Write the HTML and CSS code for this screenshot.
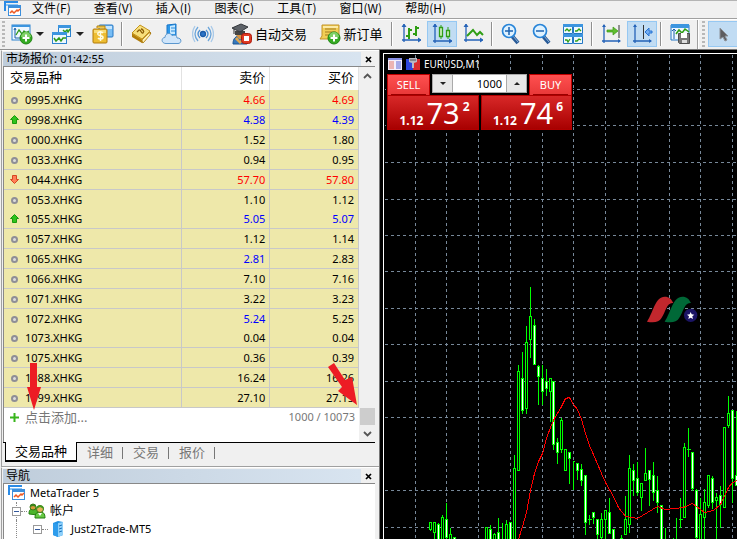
FILE: index.html
```html
<!DOCTYPE html>
<html lang="zh-CN">
<head>
<meta charset="utf-8">
<title>MetaTrader 5</title>
<link rel="stylesheet" href="styles.css">
</head>
<body>
<nav class="menu" aria-label="菜单">
  <svg class="menu-logo" width="18" height="16" viewBox="0 0 18 16"><path d="M1 10V1h13" fill="none" stroke="#2b8be6" stroke-width="2"/><path d="M2 3h12v2H2z" fill="#8cc6f7"/><rect x="4.500" y="4.500" width="12" height="10" fill="#fff" stroke="#3c8fdc"/><path d="M4 4h13v3H4z" fill="#3c8fdc"/><path d="m6 12 2-2 2 2 3-3 1 1 2-2" fill="none" stroke="#ee5a24" stroke-width="1.500"/></svg>
  <button class="menu-item">文件(F)</button>
  <button class="menu-item">查看(V)</button>
  <button class="menu-item">插入(I)</button>
  <button class="menu-item">图表(C)</button>
  <button class="menu-item">工具(T)</button>
  <button class="menu-item">窗口(W)</button>
  <button class="menu-item">帮助(H)</button>
</nav>

<div class="toolbar" role="toolbar" aria-label="工具栏">
  <span class="grip"></span>
  <button class="tool split" aria-label="新图表">
    <svg width="22" height="22" viewBox="0 0 22 22"><rect x="1" y="2" width="18" height="15" fill="#eef7ff" stroke="#2c83cf"/><path d="M1 2h18v2H1z" fill="#3c95df"/><path d="M4 6v9h12M3 7l1-2 1 2" fill="none" stroke="#1c5fa8"/><path d="m5 12 3-5 3 4 2-3 2 2 3-2" fill="none" stroke="#2e9a1c" stroke-width="1.300"/><circle cx="15" cy="15" r="6" fill="#35ab22" stroke="#1e8412"/><path d="M10 14a5 5 0 0 1 10 0z" fill="#7ed067"/><path d="M15 11.500v7M11.500 15h7" stroke="#fff" stroke-width="2"/></svg>
    <i class="caret"></i>
  </button>
  <button class="tool split" aria-label="配置文件">
    <svg width="22" height="22" viewBox="0 0 22 22"><rect x="7.500" y="2.500" width="12" height="11" fill="#eef7ff" stroke="#2c83cf"/><path d="M7 2h13v3H7z" fill="#3c95df"/><path d="m12 7 2 2 2-2 1 2 2-3" fill="none" stroke="#2e9a1c" stroke-width="1.500"/><rect x="1.500" y="9.500" width="14" height="11" fill="#eef7ff" stroke="#2c83cf"/><path d="M1 9h15v3H1z" fill="#3c95df"/><path d="m3 15 2 3 3-3 2 3 2-3h3" fill="none" stroke="#2e9a1c" stroke-width="1.500"/></svg>
    <i class="caret"></i>
  </button>
  <button class="tool" aria-label="市场报价">
    <svg width="22" height="22" viewBox="0 0 22 22"><rect x="7" y="2" width="14" height="12" rx="1" fill="#77bdf5" stroke="#2477c4"/><path d="M8 3h12v3H8z" fill="#c5e6ff"/><path d="M5 5V3h8v3" fill="#efc84f" stroke="#b98512"/><rect x="1" y="6" width="14" height="14" rx="1" fill="#edbd32" stroke="#b17b0a"/><path d="M2 7h12v3H2z" fill="#f8dc78"/><path d="M11 10C9 8 5 9 6 11.500c1 2 5 .5 5 3 0 2-4 2-5 .5M8.500 8v10" fill="none" stroke="#fffce4" stroke-width="1.500"/></svg>
  </button>
  <span class="sep"></span>
  <button class="tool" aria-label="导航">
    <svg width="22" height="22" viewBox="0 0 22 22"><path d="m2 11 8-8 11 7-8 10z" fill="#d9a520" stroke="#a87608"/><path d="m2 10 8-8 10 6-8 8z" fill="#f7df7b" stroke="#c4941e"/><path d="m2 11 10 6v3L2 14z" fill="#b17d0b"/><path d="m12 17 8-8v3l-7 8z" fill="#fff2b5" stroke="#b08018" stroke-width=".7"/><path d="m7 9 2-2c2-1 2 4 4 3 2-2-1-4-2-4" fill="none" stroke="#8b5d05" stroke-width="1.300"/></svg>
  </button>
  <button class="tool" aria-label="MQL5 云">
    <svg width="22" height="22" viewBox="0 0 22 22"><path d="M6 2 15 1v12H6z" fill="#2b98ea" stroke="#1b75c6"/><path d="m9 3 5-1v9H9z" fill="#c8e9ff"/><path d="M10 5h4M10 8h4" stroke="#2b8bda"/><path d="M5 20.500c-5 0-5-6-1-6 0-5 6-5 7-2 3-1 5 0 5 2.500 5-.5 5 5.500 1 5.500z" fill="#cfe5fa" stroke="#5b97ce"/></svg>
  </button>
  <button class="tool" aria-label="信号">
    <svg width="22" height="22" viewBox="0 0 22 22" fill="none" stroke-width="1.300"><circle cx="11" cy="11" r="2.500" fill="#2d75c8" stroke="#1b5ba8"/><path d="M8 7q-4 4 0 8M14 7q4 4 0 8" stroke="#4e91d3"/><path d="M6 4q-6 7 0 14M16 4q6 7 0 14" stroke="#6da6da"/><path d="M3 3q-5 8 0 16M19 3q5 8 0 16" stroke="#a9cae9"/></svg>
  </button>
  <button class="tool labelled auto">
    <svg width="22" height="22" viewBox="0 0 22 22"><path d="M2 21c0-6 3-8 7-8s7 2 7 8z" fill="#3578bd" stroke="#1d5590"/><path d="M5 9h8v3l-2 4H8l-3-4z" fill="#d59343"/><path d="M4 8h10v4H4z" fill="#444"/><path d="m1 5 9-4 7 3-8 5z" fill="#5d6268" stroke="#33373b"/><path d="M3 6v5" stroke="#333"/><path d="m6 14 3 4 3-4 2 2-5 5-5-5z" fill="#e3a84f"/><rect x="10.500" y="10.500" width="10" height="10" rx="3" fill="#e03a23" stroke="#a91a0c"/><path d="M13 13h5v5h-5z" fill="#fff"/></svg>
    <span>自动交易</span>
  </button>
  <button class="tool labelled order">
    <svg width="22" height="22" viewBox="0 0 22 22"><path d="M3 2h17v14H1l2-3z" fill="#f2ce55" stroke="#c2932a"/><path d="M4 3h15v2H4z" fill="#fceaa6"/><path d="M6 6h11M6 9h11M6 12h8" stroke="#a37a20"/><circle cx="15" cy="15" r="6" fill="#35ab22" stroke="#1e8412"/><path d="M10 14a5 5 0 0 1 10 0z" fill="#7ed067"/><path d="M15 11.500v7M11.500 15h7" stroke="#fff" stroke-width="2"/></svg>
    <span>新订单</span>
  </button>
  <span class="sep"></span>
  <button class="tool" aria-label="柱形图">
    <svg width="22" height="22" viewBox="0 0 22 22" fill="none"><path d="M4 2v17M2 17h18" stroke="#2563b8" stroke-width="1.300"/><path d="M2 4l2-3 2 3M18 15l3 2-3 2" fill="#2563b8" stroke="#2563b8"/><path d="M9 5v11M6 13h3M9 7h3M16 3v10M13 11h3M16 5h3" stroke="#2f9e14" stroke-width="2"/></svg>
  </button>
  <button class="tool active" aria-label="蜡烛图">
    <svg width="22" height="22" viewBox="0 0 22 22" fill="none"><path d="M4 2v18M2 18h18" stroke="#2563b8" stroke-width="1.300"/><path d="M2 4l2-3 2 3M18 16l3 2-3 2" fill="#2563b8" stroke="#2563b8"/><path d="M10 2v14M17 4v12" stroke="#2f9e14"/><path d="M8.500 4.500h3v9h-3zM15.500 7.500h3v6h-3z" fill="#d3f1c1" stroke="#2f9e14" stroke-width="1.300"/></svg>
  </button>
  <button class="tool" aria-label="折线图">
    <svg width="22" height="22" viewBox="0 0 22 22" fill="none"><path d="M4 2v17M2 17h18" stroke="#2563b8" stroke-width="1.300"/><path d="M2 4l2-3 2 3M18 15l3 2-3 2" fill="#2563b8" stroke="#2563b8"/><path d="m5 13 6-6 4 5 3-3 3 3" stroke="#2f9e14" stroke-width="2"/></svg>
  </button>
  <span class="sep"></span>
  <button class="tool" aria-label="放大">
    <svg width="22" height="22" viewBox="0 0 22 22"><path d="m12 13 6 7" stroke="#285a97" stroke-width="4"/><path d="m13 13 5 6" stroke="#8cb5de"/><circle cx="9" cy="8" r="6.500" fill="#dff2ff" stroke="#2784d8" stroke-width="1.700"/><path d="M9 4v8M5 8h8" stroke="#1c62b0" stroke-width="1.500"/></svg>
  </button>
  <button class="tool" aria-label="缩小">
    <svg width="22" height="22" viewBox="0 0 22 22"><path d="m12 13 6 7" stroke="#285a97" stroke-width="4"/><path d="m13 13 5 6" stroke="#8cb5de"/><circle cx="9" cy="8" r="6.500" fill="#dff2ff" stroke="#2784d8" stroke-width="1.700"/><path d="M5 8h8" stroke="#1c62b0" stroke-width="1.500"/></svg>
  </button>
  <button class="tool" aria-label="平铺窗口">
    <svg width="22" height="22" viewBox="0 0 22 22"><path d="M1.500 1.500h9v9h-9zM11.500 1.500h9v9h-9zM1.500 11.500h9v9h-9zM11.500 11.500h9v9h-9z" fill="#f0faff" stroke="#2477c4"/><path d="M1 1h20v3H1zM1 11h20v3H1z" fill="#3c95df"/><path d="m3 8 2-2 2 2 2-2M13 8h2l2-2 2 2M3 17h2l1 2 2-3M13 18h2l2-2 2 1" fill="none" stroke="#2f9e14" stroke-width="1.300"/></svg>
  </button>
  <span class="sep"></span>
  <button class="tool" aria-label="自动滚动">
    <svg width="22" height="22" viewBox="0 0 22 22"><path d="M4 2v18M2 18h18" stroke="#2563b8" stroke-width="1.300"/><path d="M2 4l2-3 2 3M18 16l3 2-3 2" fill="#2563b8"/><path d="M19 2v13" stroke="#333"/><path d="M7 7h6V4l5 4-5 4V9H7z" fill="#60bd2f" stroke="#399813" stroke-width=".7"/></svg>
  </button>
  <button class="tool active" aria-label="图表平移">
    <svg width="22" height="22" viewBox="0 0 22 22"><path d="M4 2v18M2 18h18" stroke="#2563b8" stroke-width="1.300"/><path d="M2 4l2-3 2 3M18 16l3 2-3 2" fill="#2563b8"/><path d="M12.500 2v14" stroke="#333"/><path d="M21 8h-3V5l-4 4 4 4v-3h3z" fill="#73acf0" stroke="#2672d2"/></svg>
  </button>
  <span class="sep"></span>
  <button class="tool" aria-label="模板">
    <svg width="22" height="22" viewBox="0 0 22 22"><path d="M2 2h18v15H2z" fill="#eef7ff" stroke="#2477c4"/><path d="M2 1h18v4H2z" fill="#3c95df"/><path d="M5 7v9M3 8l2-2 2 2" fill="none" stroke="#1c5fa8"/><path d="m7 11 3-4 3 3 3-4 4 3" fill="none" stroke="#2f9e14" stroke-width="1.500"/><path d="M9.500 10.500h11v10h-10l-1-1z" fill="#777" stroke="#4d4d4d"/><path d="M12 10h6v5h-6z" fill="#fff"/><path d="M13 17h5v3h-5z" fill="#ddd"/></svg>
  </button>
  <span class="edge"></span>
  <span class="grip"></span>
  <button class="tool active" aria-label="光标">
    <svg width="22" height="22" viewBox="0 0 22 22"><path d="M8 5v11l3-2 2 4 2-1-2-4h3z" fill="#5d5d60" stroke="#8d9298"/></svg>
  </button>
</div>

<div class="workspace">
  <aside class="side">
    <section class="panel market">
      <header class="title"><h2>市场报价: <time>01:42:55</time></h2><button class="close" aria-label="关闭"><svg width="7" height="7" viewBox="0 0 7 7"><path d="m1 1 5 5M6 1 1 6" stroke="#000" stroke-width="1.700"/></svg></button></header>
      <div class="quotes">
        <div class="quotes-body">
          <table>
            <thead><tr><th>交易品种</th><th>卖价</th><th>买价</th></tr></thead>
            <tbody>
              <tr><td><i class="dot"></i>0995.XHKG</td><td class="down">4.66</td><td class="down">4.69</td></tr>
              <tr><td><svg class="mark" viewBox="0 0 9 9"><path d="m4.500.5 4 4h-2v4h-4v-4h-2z" fill="#2fc31d" stroke="#189a0c"/></svg>0998.XHKG</td><td class="up">4.38</td><td class="up">4.39</td></tr>
              <tr><td><i class="dot"></i>1000.XHKG</td><td>1.52</td><td>1.80</td></tr>
              <tr><td><i class="dot"></i>1033.XHKG</td><td>0.94</td><td>0.95</td></tr>
              <tr><td><svg class="mark" viewBox="0 0 9 9"><path d="m4.500 8.500 4-4h-2v-4h-4v4h-2z" fill="#ff8057" stroke="#d64521"/></svg>1044.XHKG</td><td class="down">57.70</td><td class="down">57.80</td></tr>
              <tr class="joined"><td><i class="dot"></i>1053.XHKG</td><td>1.10</td><td>1.12</td></tr>
              <tr><td><svg class="mark" viewBox="0 0 9 9"><path d="m4.500.5 4 4h-2v4h-4v-4h-2z" fill="#2fc31d" stroke="#189a0c"/></svg>1055.XHKG</td><td class="up">5.05</td><td class="up">5.07</td></tr>
              <tr><td><i class="dot"></i>1057.XHKG</td><td>1.12</td><td>1.14</td></tr>
              <tr><td><i class="dot"></i>1065.XHKG</td><td class="up">2.81</td><td>2.83</td></tr>
              <tr><td><i class="dot"></i>1066.XHKG</td><td>7.10</td><td>7.16</td></tr>
              <tr><td><i class="dot"></i>1071.XHKG</td><td>3.22</td><td>3.23</td></tr>
              <tr class="joined"><td><i class="dot"></i>1072.XHKG</td><td class="up">5.24</td><td>5.25</td></tr>
              <tr><td><i class="dot"></i>1073.XHKG</td><td>0.04</td><td>0.04</td></tr>
              <tr><td><i class="dot"></i>1075.XHKG</td><td>0.36</td><td>0.39</td></tr>
              <tr><td><i class="dot"></i>1088.XHKG</td><td>16.24</td><td>16.26</td></tr>
              <tr><td><i class="dot"></i>1099.XHKG</td><td>27.10</td><td>27.15</td></tr>
            </tbody>
          </table>
          <div class="add"><button class="add-btn"><svg class="mark" viewBox="0 0 9 9"><path d="M4.500 0v9M0 4.500h9" stroke="#39b51c" stroke-width="2"/></svg>点击添加...</button><span>1000 / 10073</span></div>
        </div>
        <div class="scroll">
          <svg width="9" height="6" viewBox="0 0 9 6"><path d="m1 5 3.500-3.500L8 5" fill="none" stroke="#555" stroke-width="1.800"/></svg>
          <span class="thumb"></span>
          <svg width="9" height="6" viewBox="0 0 9 6"><path d="m1 1 3.500 3.500L8 1" fill="none" stroke="#555" stroke-width="1.800"/></svg>
        </div>
      </div>
      <div class="tabs" role="tablist">
        <button class="tab selected" role="tab" aria-selected="true">交易品种</button>
        <button class="tab" role="tab">详细</button>
        <button class="tab" role="tab">交易</button>
        <button class="tab" role="tab">报价</button>
      </div>
      <svg class="pointer first" width="16" height="48" viewBox="0 0 16 48"><path d="M4 0h7v24h4L8 47 1 24h3z" fill="#ed1c24"/></svg>
      <svg class="pointer second" width="30" height="44" viewBox="0 0 30 44"><path d="m0 4 6-4 11 17 7-3 5 28-19-14 4-4z" fill="#ed1c24"/></svg>
    </section>

    <section class="panel navigator">
      <header class="title"><h2>导航</h2><button class="close" aria-label="关闭"><svg width="7" height="7" viewBox="0 0 7 7"><path d="m1 1 5 5M6 1 1 6" stroke="#000" stroke-width="1.700"/></svg></button></header>
      <ul class="tree">
        <li><svg width="18" height="16" viewBox="0 0 18 16"><path d="M1 10V1h13" fill="none" stroke="#2b8be6" stroke-width="2"/><path d="M2 3h12v2H2z" fill="#8cc6f7"/><rect x="4.500" y="4.500" width="12" height="10" fill="#fff" stroke="#3c8fdc"/><path d="M4 4h13v3H4z" fill="#3c8fdc"/><path d="m6 12 2-2 2 2 3-3 1 1 2-2" fill="none" stroke="#ee5a24" stroke-width="1.500"/></svg><span>MetaTrader 5</span></li>
        <li class="level-1"><i class="box"></i><svg width="18" height="16" viewBox="0 0 18 16"><path d="M1 11c0-5 2-5 4-5s5 0 5 6z" fill="#4cb52b" stroke="#237f10"/><circle cx="5" cy="4" r="3" fill="#d69a3c" stroke="#3d7a19"/><path d="M2 4c0-4 6-4 6 0L5 3z" fill="#37851c"/><path d="M7 15c0-5 2-6 5-6s5 1 5 6z" fill="#66c944" stroke="#237f10"/><circle cx="12" cy="6" r="3.500" fill="#e5b35a" stroke="#3d7a19"/><path d="M8 6c0-5 8-5 8 0l-4-2z" fill="#43991f"/><path d="m10 10 2 3 2-3" fill="#fff"/></svg><span>帐户</span></li>
        <li class="level-2"><i class="box"></i><svg width="18" height="16" viewBox="0 0 18 16"><path d="m4 2 5-2 5 1v13l-5 2-5-2z" fill="#1e8fe2"/><path d="m9 2 5-1v13l-5 2z" fill="#8ed0fa"/><path d="M4 2v12l5 2V3z" fill="#2d9cec"/><path d="m10 5 3-1M10 8l3-1M10 11l3-1" stroke="#1870bb"/></svg><span>Just2Trade-MT5</span></li>
      </ul>
    </section>
  </aside>

  <main class="chart">
    <svg class="plot" width="100%" height="100%" aria-label="EURUSD M1">
      <g transform="translate(-383.5 -53.5)" shape-rendering="crispEdges" fill="none">
        <path stroke="#778899" stroke-dasharray="3 3" d="M415 54V540M446 54V540M478 54V540M510 54V540M542 54V540M573 54V540M605 54V540M637 54V540M669 54V540M700 54V540M732 54V540M384 89H1600M384 125H1600M384 162H1600M384 199H1600M384 235H1600M384 271H1600M384 308H1600M384 344H1600M384 381H1600M384 417H1600M384 490H1600M384 527H1600"/>
        <path stroke="#0f0" d="M430 522V530M434 522V540M438 522V540M442 514V540M446 502V540M450 527V540M490 524V540M494 532V540M498 517V540M502 522V540M506 519V540M514 454V540M518 364V470M522 351V413M526 325V413M530 286V357M534 318V364M538 364V404M542 364V404M546 368V395M550 378V421M553 381V449M557 437V463M561 417V452M569 452V483M573 461V489M572 461H574M577 463V479M581 463V485M585 475V534M589 514V524M587 519H591M593 512V523M597 519V540M601 512V540M605 510V540M609 497V533M613 529V540M621 534V540M625 495V534M629 454V532M633 463V495M637 461V495M641 483V510M645 447V480M649 470V505M653 461V500M657 475V512M661 505V540M665 527V540M673 537V540M676 517V540M680 497V527M678 519H682M684 442V517M688 427V456M686 449H690M692 452V490M696 488V540M700 497V540M704 488V540M708 475V507M712 475V508M716 492V540M720 485V527M724 427V507M728 395V427M732 410V502M736 410V485"/>
        <path stroke="#0f0" fill="#000" d="M429 522h2v7h-2zM433 522h2v10h-2zM441 517h2v25h-2zM449 534h2v8h-2zM485 527h2v15h-2zM493 534h2v8h-2zM505 524h2v18h-2zM513 468h2v74h-2zM517 371h2v99h-2zM525 342h2v66h-2zM529 316h2v23h-2zM549 378h2v13h-2zM560 420h2v29h-2zM564 449h2v21h-2zM600 519h2v18h-2zM604 510h2v9h-2zM620 538h2v4h-2zM624 519h2v15h-2zM628 468h2v56h-2zM640 483h2v14h-2zM644 473h2v7h-2zM683 447h2v70h-2zM699 514h2v28h-2zM703 502h2v15h-2zM707 475h2v30h-2zM715 497h2v3h-2zM723 427h2v80h-2zM727 413h2v12h-2z"/>
        <path stroke="#0f0" fill="#fff" d="M437 524h2v18h-2zM445 519h2v18h-2zM453 537h2v5h-2zM489 529h2v13h-2zM497 532h2v10h-2zM509 522h2v20h-2zM521 378h2v32h-2zM533 325h2v39h-2zM537 366h2v10h-2zM541 378h2v13h-2zM545 381h2v7h-2zM552 381h2v63h-2zM556 442h2v10h-2zM568 452h2v6h-2zM576 463h2v7h-2zM580 469h2v11h-2zM584 475h2v47h-2zM592 512h2v5h-2zM596 519h2v15h-2zM608 512h2v21h-2zM612 529h2v13h-2zM632 470h2v10h-2zM636 478h2v14h-2zM648 470h2v9h-2zM652 475h2v17h-2zM656 490h2v12h-2zM660 505h2v37h-2zM691 452h2v36h-2zM695 490h2v47h-2zM711 478h2v24h-2zM719 495h2v9h-2zM731 410h2v68h-2zM735 475h2v10h-2z"/>
        <path stroke="#f00" d="m518 539 4-13 4-14 4-22 4-17 4-12 4-8 4-15 4-11 4-9 6-10 5-10 4-1 4 7 4 5 4 10 4 14 4 12 4 9 8 19 4 9 8 14 5 11 7 9 12 2 10-6 10-6 8 3 18-2 9-4 12 9 9-2 7-6 8-17 4-5 5-2"/>
      </g>
      <g transform="translate(256 236) scale(.3333)">
        <path d="M21 95C40 66 46 20 74 20c14 0 20 7 26 19-20-3-22 25-36 46-6 12-24 14-43 10z" fill="#c1272d"/>
        <path d="M74 95C93 66 99 20 127 20c14 0 20 7 26 19-20-3-22 25-36 46-6 12-24 14-43 10z" fill="#006837"/>
        <circle cx="152" cy="76" r="20" fill="#1b1464"/>
        <path d="m152 66 3 7 8 1-6 5 2 8-7-4-7 4 2-8-6-5 8-1z" fill="#fff"/>
      </g>
    </svg>
    <div class="chart-title">
      <svg width="14" height="12" viewBox="0 0 14 12"><path d="M0 0h14v12H0z" fill="#f4eefc"/><path d="M0 0h14v2H0z" fill="#8a91e6"/><path d="M1 4h5M1 6h5M1 8h5M1 10h5" stroke="#e47a6a"/><path d="M8 4h5M8 6h5M8 8h5M8 10h5" stroke="#5c6bd8"/></svg>
      <svg width="14" height="12" viewBox="0 0 14 12"><path d="M0 1h7v11H0z" fill="#2e46dc"/><path d="M7 1h7v11H7z" fill="#d92c30"/><path d="M3 0h8v4L8 5v5H6V5L3 4z" fill="#b9b9c4"/><path d="M4 2h6" stroke="#555"/></svg>
      <h1>EURUSD,M1</h1>
    </div>
    <form class="trade">
      <div class="trade-top">
        <button type="button" class="side-btn">SELL</button>
        <div class="volume">
          <button type="button" aria-label="减少"><i class="caret"></i></button>
          <input type="text" value="1000" aria-label="交易量">
          <button type="button" aria-label="增加"><i class="caret flip"></i></button>
        </div>
        <button type="button" class="side-btn">BUY</button>
      </div>
      <div class="prices">
        <button type="button" class="price"><b>1.12</b><span>73</span><sup>2</sup></button>
        <button type="button" class="price"><b>1.12</b><span>74</span><sup>6</sup></button>
      </div>
    </form>
  </main>
</div>
</body>
</html>
```
FILE: styles.css
```css
* { box-sizing: border-box; }

body {
  margin: 0;
  height: 100vh;
  display: flex;
  flex-direction: column;
  overflow: hidden;
  background: #f0f0f0;
  color: #000;
  font: 12px/16px "Noto Sans", "Noto Sans CJK SC", sans-serif;
}

button {
  padding: 0;
  border: 0;
  background: none;
  color: inherit;
  font: inherit;
}

h1, h2 { margin: 0; font-weight: 400; }

svg { display: block; flex: none; }

/* Menu */
.menu {
  display: flex;
  align-items: flex-start;
  gap: 23px;
  height: 19px;
  flex: none;
  padding: 0 4px;
  border-top: 1px solid #b4b4b4;
  border-bottom: 1px solid #a0a0a0;
  font-family: "Noto Sans CJK SC", sans-serif;
}

.menu-item { line-height: 14px; }
.menu-logo { margin-right: -13px; }

/* Toolbar */
.toolbar {
  display: flex;
  align-items: center;
  gap: 1px;
  height: 31px;
  flex: none;
  padding: 0 0 2px 2px;
  border-top: 1px solid #fff;
  border-bottom: 1px solid #909090;
  overflow: hidden;
}

.grip {
  width: 3px;
  height: 26px;
  flex: none;
  margin-right: 2px;
  background: repeating-linear-gradient(#b8b8b8 0 2px, transparent 2px 4px);
}

.tool {
  display: flex;
  align-items: center;
  justify-content: center;
  width: 30px;
  height: 26px;
  flex: none;
}

.tool.split { width: 39px; gap: 3px; }
.tool.labelled { gap: 2px; font-size: 13px; white-space: nowrap; }
.tool.auto { width: 84px; margin-left: 8px; }
.tool.order { width: 74px; margin-left: 2px; }
.tool.active { background: #c1dcf3; border: 1px solid #96c8f2; }

.sep {
  width: 2px;
  height: 24px;
  flex: none;
  margin: 0 2px;
  border-left: 1px solid #909090;
  border-right: 1px solid #fff;
}

.edge {
  width: 2px;
  height: 31px;
  flex: none;
  margin: 0 2px 0 1px;
  border-left: 1px solid #a0a0a0;
  border-right: 1px solid #fff;
}

.caret {
  border: 4px solid transparent;
  border-top-color: #222;
  border-bottom: 0;
}

.volume .caret { border-width: 3px; border-bottom: 0; }
.caret.flip { transform: rotate(180deg); }

/* Workspace */
.workspace {
  display: grid;
  grid-template-columns: 380px 1fr;
  flex: 1;
  min-height: 0;
}

.side {
  display: flex;
  flex-direction: column;
  min-height: 0;
  padding-left: 1px;
}

.panel {
  padding: 1px 4px 0 1px;
  border: 1px solid #a0a0a0;
  border-top-color: #fff;
  border-right-color: #fff;
}

.market { position: relative; }
.navigator { flex: 1; min-height: 0; border-bottom: 0; }

.title {
  display: flex;
  align-items: center;
  height: 14px;
  background: linear-gradient(90deg, #bfcddb, #d9e5f1);
}

.title h2 {
  flex: 1;
  padding-left: 3px;
  font-size: 12px;
  line-height: 14px;
}

.title time { font-size: 11px; }

.close {
  display: flex;
  align-items: center;
  justify-content: center;
  width: 14px;
  height: 14px;
  background: #f0f0f0;
}

/* Quotes */
.quotes {
  display: flex;
  border-top: 1px solid #888;
  border-left: 1px solid #888;
}

.quotes-body { flex: 1; background: #fff; }

table {
  width: 100%;
  border-collapse: separate;
  border-spacing: 0;
  table-layout: fixed;
  background: #eee8aa;
}

th, td {
  height: 20px;
  padding: 0 4px;
  border-right: 1px solid #c8c8c8;
  border-bottom: 1px solid #c8c8c8;
  font-size: 11px;
  font-weight: 400;
  line-height: 18px;
  text-align: right;
}

th {
  height: 23px;
  padding-bottom: 3px;
  border-bottom: 0;
  background: #fff;
  border-right-color: #e2e2e2;
  font-size: 13px;
}

th:first-child, td:first-child { width: 50%; padding-left: 6px; text-align: left; }
th:nth-child(2) { width: 25%; }

.joined td { height: 19px; border-bottom: 0; }
.up { color: #00f; }
.down { color: #f00; }

.dot {
  display: inline-block;
  width: 7px;
  height: 7px;
  margin: 0 7px 0 1px;
  border: 2px solid #8e8e96;
  border-radius: 50%;
  background: #ddd;
}

.mark {
  display: inline-block;
  width: 9px;
  height: 9px;
  margin-right: 6px;
}

.add {
  display: flex;
  align-items: center;
  justify-content: space-between;
  height: 34px;
  padding: 0 4px 16px 6px;
  color: #777;
}

.add-btn { font-size: 13px; }
.add span { font-size: 11px; }

.scroll {
  display: flex;
  flex-direction: column;
  align-items: center;
  width: 16px;
  padding: 6px 0 5px;
  background: #f0f0f0;
}

.thumb {
  width: 15px;
  height: 17px;
  margin: auto 0 6px;
  background: #cdcdcd;
}

/* Tabs */
.tabs {
  display: flex;
  align-items: flex-start;
  height: 24px;
  border-top: 1px solid #000;
}

.tab {
  position: relative;
  height: 18px;
  padding: 0 10px;
  color: #777;
  font-size: 13px;
  line-height: 17px;
}

.tab:not(.selected)::after {
  content: "";
  position: absolute;
  right: 0;
  top: 4px;
  height: 12px;
  border-right: 1px solid #777;
}

.tab.selected {
  height: 20px;
  margin: -1px 0 0 2px;
  padding: 0 9px;
  border: solid #000;
  border-width: 0 1px 2px;
  background: #fff;
  color: #000;
  line-height: 18px;
}

.pointer { position: absolute; }
.pointer.first { left: 24px; top: 312px; }
.pointer.second { left: 326px; top: 312px; }

/* Navigator */
.tree {
  height: 100%;
  margin: 0;
  padding: 0 0 0 4px;
  border-top: 1px solid #888;
  border-left: 1px solid #888;
  background: #fff;
  list-style: none;
}

.tree li {
  position: relative;
  display: flex;
  align-items: center;
  gap: 4px;
  height: 18px;
  font-size: 11px;
}

.tree .level-1 { padding-left: 4px; font-size: 12px; }
.tree .level-2 { padding-left: 25px; }

/* Dotted branches joining the nodes */
.tree li:not(:first-child)::before {
  content: "";
  position: absolute;
  left: 8px;
  top: 0;
  height: 100%;
  border-left: 1px dotted #888;
}

.box {
  position: relative;
  width: 9px;
  height: 9px;
  margin-right: 3px;
  border: 1px solid #999;
  background: linear-gradient(#34589c, #34589c) center / 5px 1px no-repeat #fff;
}

.box::after {
  content: "";
  position: absolute;
  left: 8px;
  top: 3px;
  width: 6px;
  border-top: 1px dotted #888;
}

/* Chart */
.chart {
  position: relative;
  min-width: 0;
  border-top: 3px solid #000;
  border-left: 3px solid #000;
  box-shadow: inset 1px 1px #fff;
  outline: 1px solid #777;
  background: #000;
  overflow: hidden;
}

.plot { position: absolute; left: 1px; top: 1px; }

.chart-title {
  position: relative;
  display: flex;
  align-items: center;
  gap: 4px;
  padding: 4px 0 0 5px;
  color: #fff;
}

.chart-title h1 { font-size: 10px; line-height: 14px; }

.trade {
  position: relative;
  width: 187px;
  margin: 2px 0 0 3px;
  padding: 1px;
  background: #000;
  color: #fff;
}

.trade-top, .prices { display: flex; gap: 2px; }

.side-btn {
  width: 43px;
  height: 21px;
  flex: none;
  border: 1px solid #c00000;
  border-bottom: 0;
  background: linear-gradient(#ff5050, #e83838);
  font-size: 11px;
  line-height: 18px;
}

.side-btn::after {
  content: "";
  display: block;
  margin: 0 3px;
  border-top: 1px solid #900;
}

.volume {
  display: flex;
  flex: 1;
  min-width: 0;
  height: 19px;
  border: 1px solid #aaa;
}

.volume button {
  display: flex;
  align-items: center;
  justify-content: center;
  width: 19px;
  background: #e8e8e8;
}

.volume input {
  flex: 1;
  min-width: 0;
  padding: 0 4px;
  border: solid #aaa;
  border-width: 0 1px;
  background: #fff;
  font: 11px/16px "Noto Sans", sans-serif;
  text-align: right;
}

.price {
  display: flex;
  align-items: flex-end;
  justify-content: flex-end;
  gap: 3px;
  flex: 1;
  height: 35px;
  padding: 0 8px 1px 0;
  border: 1px solid #b00000;
  background: linear-gradient(#d82828, #a80000);
}

.price b { font-size: 12px; line-height: 14px; }
.price span { font-size: 29px; line-height: 30px; }
.price sup { align-self: flex-start; padding-top: 4px; font-size: 12px; font-weight: 700; line-height: 14px; }
```
